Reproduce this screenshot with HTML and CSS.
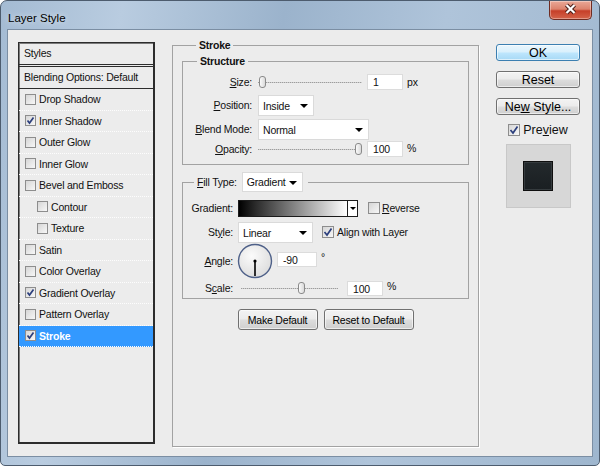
FILE: index.html
```html
<!DOCTYPE html>
<html lang="en">
<head>
  <meta charset="UTF-8" />
  <title>Layer Style</title>
  <link rel="stylesheet" href="styles.css">
</head>
<body>

  <div class="window">
    <!-- Title bar -->
    <div class="titlebar">
      <span class="title">Layer Style</span>
      <div class="close-btn">
        <svg width="43" height="19" viewBox="0 0 43 19">
          <path d="M17.5 5 L25.5 13 M25.5 5 L17.5 13" stroke="#4a1d17" stroke-width="4.2" fill="none"/>
          <path d="M17.5 5 L25.5 13 M25.5 5 L17.5 13" stroke="#fff" stroke-width="2.2" fill="none"/>
        </svg>
      </div>
    </div>

    <div class="client">
      <!-- Styles list -->
      <div class="styles-list">
        <div class="list-head">Styles</div>
        <div class="list-blend">Blending Options: Default</div>
        <div class="list-item"><span class="check"></span>Drop Shadow</div>
        <div class="list-item"><span class="check"><svg viewBox="0 0 9 9"><path d="M1.5 4.5 L3.5 7 L7.5 1.5" /></svg></span>Inner Shadow</div>
        <div class="list-item"><span class="check"></span>Outer Glow</div>
        <div class="list-item"><span class="check"></span>Inner Glow</div>
        <div class="list-item"><span class="check"></span>Bevel and Emboss</div>
        <div class="list-item sub"><span class="check"></span>Contour</div>
        <div class="list-item sub"><span class="check"></span>Texture</div>
        <div class="list-item"><span class="check"></span>Satin</div>
        <div class="list-item"><span class="check"></span>Color Overlay</div>
        <div class="list-item"><span class="check"><svg viewBox="0 0 9 9"><path d="M1.5 4.5 L3.5 7 L7.5 1.5" /></svg></span>Gradient Overlay</div>
        <div class="list-item"><span class="check"></span>Pattern Overlay</div>
        <div class="list-item selected"><span class="check"><svg viewBox="0 0 9 9"><path d="M1.5 4.5 L3.5 7 L7.5 1.5" /></svg></span>Stroke</div>
      </div>

      <!-- Stroke settings -->
      <fieldset class="group main-group">
        <legend>Stroke</legend>

        <fieldset class="group structure">
          <legend>Structure</legend>
          <div class="row r-size">
            <span class="lbl"><u>S</u>ize:</span>
            <div class="slider"><span class="thumb"></span></div>
            <span class="field">1</span>
            <span class="unit">px</span>
          </div>
          <div class="row r-pos">
            <span class="lbl"><u>P</u>osition:</span>
            <div class="select sel-pos">Inside<span class="arrow"></span></div>
          </div>
          <div class="row r-blend">
            <span class="lbl"><u>B</u>lend Mode:</span>
            <div class="select sel-blend">Normal<span class="arrow"></span></div>
          </div>
          <div class="row r-opacity">
            <span class="lbl"><u>O</u>pacity:</span>
            <div class="slider"><span class="thumb end"></span></div>
            <span class="field">100</span>
            <span class="unit">%</span>
          </div>
        </fieldset>

        <fieldset class="group fill">
          <legend>
            <span><u>F</u>ill Type:</span>
            <div class="select sel-fill">Gradient<span class="arrow"></span></div>
          </legend>
          <div class="row r-grad">
            <span class="lbl">Gradient:</span>
            <div class="grad-box"><span class="grad"></span><span class="grad-arrow"><span class="arrow"></span></span></div>
            <span class="check lg rev"></span>
            <span class="cb-text"><u>R</u>everse</span>
          </div>
          <div class="row r-style">
            <span class="lbl">St<u>y</u>le:</span>
            <div class="select sel-style">Linear<span class="arrow"></span></div>
            <span class="check lg align"><svg viewBox="0 0 10 10"><path d="M1.5 5 L4 8 L8.5 1.5" /></svg></span>
            <span class="cb-text">Align with Layer</span>
          </div>
          <div class="row r-angle">
            <span class="lbl"><u>A</u>ngle:</span>
            <svg class="dial" width="36" height="36" viewBox="0 0 36 36">
              <defs>
                <radialGradient id="dialFill" cx="40%" cy="35%" r="70%">
                  <stop offset="0" stop-color="#fbfbfb"/>
                  <stop offset="1" stop-color="#dcdcdc"/>
                </radialGradient>
              </defs>
              <circle cx="18" cy="18" r="16.5" fill="url(#dialFill)" stroke="#4f6189" stroke-width="1.4"/>
              <line x1="18" y1="18" x2="18" y2="33" stroke="#000" stroke-width="1.6"/>
              <circle cx="18" cy="18" r="1.6" fill="#000"/>
            </svg>
            <span class="field angle-field">-90</span>
            <span class="deg">°</span>
          </div>
          <div class="row r-scale">
            <span class="lbl">S<u>c</u>ale:</span>
            <div class="slider scale-slider"><span class="thumb mid"></span></div>
            <span class="field scale-field">100</span>
            <span class="unit">%</span>
          </div>
        </fieldset>

        <div class="defaults">
          <button class="small-btn make">Make Default</button>
          <button class="small-btn reset">Reset to Default</button>
        </div>
      </fieldset>

      <!-- Dialog actions -->
      <div class="actions">
        <button class="btn primary">OK</button>
        <button class="btn">Reset</button>
        <button class="btn">Ne<u>w</u> Style...</button>
        <div class="preview-toggle">
          <span class="check lg"><svg viewBox="0 0 10 10"><path d="M1.5 5 L4 8 L8.5 1.5" /></svg></span>
          <span>Pre<u>v</u>iew</span>
        </div>
        <div class="preview-box"><div class="swatch"></div></div>
      </div>
    </div>
  </div>

</body>
</html>
```

FILE: styles.css
```css
:root {
  --face: #ececec;
  --group-line: #a2a2a2;
  --select-blue: #3399ff;
}

body {
  margin: 0;
  font-family: 'Liberation Sans', Arial, sans-serif;
  font-size: 10.5px;
  letter-spacing: -0.2px;
  color: #111;
  background: #fff;
}

u {
  text-decoration: underline;
}

/* Window frame */
.window {
  width: 600px;
  height: 466px;
  box-sizing: border-box;
  display: flex;
  flex-direction: column;
  border: 1px solid #4d5c6e;
  border-radius: 7px 7px 5px 5px;
  overflow: hidden;
  background: linear-gradient(100deg, #a4bbd3 0%, #b9cce0 18%, #9bb3cc 42%, #afc4da 66%, #9eb6ce 100%);
}

.titlebar {
  height: 28px;
  display: flex;
  align-items: flex-start;
}

.title {
  padding: 10px 0 0 7px;
  font-size: 11.5px;
  letter-spacing: 0;
  line-height: 14px;
  color: #000;
  text-shadow: 0 0 6px rgba(255, 255, 255, 0.8);
}

.close-btn {
  margin-left: auto;
  margin-right: 7px;
  width: 43px;
  height: 19px;
  box-sizing: border-box;
  border: 1px solid #6f2c22;
  border-top: none;
  border-radius: 0 0 5px 5px;
  background: linear-gradient(#eaa897 0%, #dc836d 45%, #c63f29 55%, #d4644a 100%);
  box-shadow: inset 0 0 0 1px rgba(255, 255, 255, 0.35);
}

.close-btn svg {
  display: block;
  margin: -1px 0 0 -1px;
}

.client {
  flex: 1;
  margin: 0 6px 8px 6px;
  border: 1px solid #7b8ea3;
  background: var(--face);
  padding: 12px 0 0 10px;
  display: flex;
  align-items: flex-start;
}

/* Styles list */
.styles-list {
  width: 137px;
  height: 402px;
  box-sizing: border-box;
  border: 1px solid #2c2c2c;
  border-right-width: 2px;
  border-bottom-width: 2px;
  box-shadow: inset 1px 1px 0 #7a7a7a;
  display: flex;
  flex-direction: column;
}

.list-head,
.list-blend {
  height: 21px;
  line-height: 21px;
  padding-left: 5px;
  flex-shrink: 0;
}

.list-head {
  border-bottom: 3px double #2c2c2c;
}

.list-blend {
  border-bottom: 1px solid #2c2c2c;
}

.list-item {
  height: 21.5px;
  box-sizing: border-box;
  flex-shrink: 0;
  display: flex;
  align-items: center;
  padding-left: 6px;
  border-bottom: 1px dotted #fdfdfd;
}

.list-item.sub {
  padding-left: 18px;
}

.list-item.selected {
  background: var(--select-blue);
  color: #fff;
  font-weight: bold;
}

/* Checkboxes */
.check {
  width: 11px;
  height: 11px;
  box-sizing: border-box;
  flex-shrink: 0;
  margin-right: 3px;
  border: 1px solid #8d8d8d;
  background: linear-gradient(135deg, #d6d6d6, #f7f7f7);
  display: flex;
  align-items: center;
  justify-content: center;
}

.check svg {
  width: 9px;
  height: 9px;
}

.check path {
  fill: none;
  stroke: #2c3f7d;
  stroke-width: 1.7;
}

.check.lg {
  width: 12px;
  height: 12px;
}

.check.lg svg {
  width: 10px;
  height: 10px;
}

/* Group boxes */
.group {
  margin: 0;
  padding: 0;
  min-width: 0;
  border: 1px solid var(--group-line);
  box-sizing: border-box;
}

.group > legend {
  font-weight: bold;
  line-height: 13px;
  padding: 0 3px;
  margin-left: 14px;
}

.main-group {
  margin: -3px 0 0 17px;
  width: 307px;
  height: 408px;
  padding: 0 9px;
  box-shadow: 1px 1px 0 #fff;
}

.structure {
  margin-top: 3px;
  padding: 4px 0 6px;
}

.row {
  display: flex;
  align-items: center;
}

.lbl {
  flex: 0 0 auto;
  text-align: right;
  white-space: nowrap;
}

.structure .lbl {
  width: 69px;
  margin-right: 6px;
}

.r-size { height: 20px; }
.r-pos { height: 22px; margin-top: 2px; }
.r-blend { height: 22px; margin-top: 2px; }
.r-opacity { height: 18px; }

/* Sliders */
.slider {
  width: 104px;
  height: 12px;
  margin-right: 5px;
  display: flex;
  align-items: center;
  background: repeating-linear-gradient(90deg, #9d9d9d 0 1px, #cfcfcf 1px 2px) center / 100% 1px no-repeat;
}

.thumb {
  width: 7px;
  height: 12px;
  box-sizing: border-box;
  margin-left: 1px;
  border: 1px solid #8a8a8a;
  border-radius: 3px;
  background: linear-gradient(90deg, #fafafa, #dadada);
}

.thumb.end {
  margin-left: auto;
  margin-right: 0;
}

.field {
  width: 36px;
  height: 16px;
  box-sizing: border-box;
  background: #fff;
  border: 1px solid #dcdcdc;
  padding-left: 5px;
  line-height: 14px;
}

.unit {
  margin-left: 4px;
  align-self: flex-start;
  margin-top: 2px;
}

.r-size .unit { margin-top: 4px; }

/* Drop-down boxes */
.select {
  height: 21px;
  box-sizing: border-box;
  background: #fff;
  border: 1px solid #dadada;
  padding: 1px 5px 0 4px;
  display: flex;
  align-items: center;
  justify-content: space-between;
  font-weight: normal;
}

.arrow {
  flex-shrink: 0;
  width: 0;
  height: 0;
  border-left: 4px solid transparent;
  border-right: 4px solid transparent;
  border-top: 4px solid #000;
}

.sel-pos { width: 56px; }
.sel-blend { width: 111px; }
.sel-style { width: 75px; }

/* Fill group */
.fill {
  margin-top: 7px;
  padding: 7px 0 3px;
}

.fill > legend {
  display: flex;
  align-items: center;
  font-weight: normal;
  margin-left: 11px;
  padding: 0 5px 0 3px;
}

.sel-fill {
  width: 61px;
  height: 20px;
  margin-left: 5px;
}

.fill .lbl {
  width: 50px;
  margin-right: 5px;
}

.r-grad { height: 18px; margin-bottom: 4px; }
.r-style { height: 22px; }
.r-angle { height: 36px; }
.r-scale { height: 14px; margin-top: 2px; }

.grad-box {
  width: 120px;
  height: 17px;
  box-sizing: border-box;
  border: 1px solid #1b1b1b;
  display: flex;
}

.grad {
  flex: 1;
  background: linear-gradient(90deg, #000 0%, #2a2a2a 15%, #fff 100%);
}

.grad-arrow {
  width: 9px;
  border-left: 1px solid #1b1b1b;
  background: #fff;
  display: flex;
  align-items: center;
  justify-content: center;
}

.grad-arrow .arrow {
  border-left-width: 3px;
  border-right-width: 3px;
  border-top-width: 3px;
}

.check.rev {
  margin-left: 10px;
  margin-right: 2px;
}

.check.align {
  margin-left: 9px;
  margin-right: 3px;
}

.dial {
  display: block;
  flex-shrink: 0;
  margin-left: -1px;
}

.angle-field {
  width: 40px;
  height: 15px;
  margin-left: 4px;
  align-self: flex-start;
  margin-top: 9px;
}

.deg {
  align-self: flex-start;
  margin: 8px 0 0 4px;
}

.scale-slider {
  width: 97px;
  margin-left: 3px;
  margin-right: 9px;
}

.thumb.mid {
  margin-left: 57px;
}

.scale-field {
  height: 15px;
}

.r-scale .unit {
  margin-top: -1px;
}

/* Buttons */
.defaults {
  display: flex;
  justify-content: center;
  gap: 6px;
  margin-top: 10px;
}

.small-btn,
.btn {
  font-family: inherit;
  color: #000;
  border: 1px solid #707070;
  border-radius: 3px;
  background: linear-gradient(#f3f3f3 0%, #ebebeb 48%, #dddddd 52%, #cfcfcf 100%);
  box-shadow: inset 0 0 0 1px rgba(255, 255, 255, 0.6);
  padding: 0;
  cursor: pointer;
}

.small-btn {
  height: 21px;
  font-size: 10.5px;
  letter-spacing: -0.2px;
}

.small-btn.make { width: 80px; }
.small-btn.reset { width: 90px; }

.actions {
  width: 84px;
  margin: 2px 0 0 17px;
  display: flex;
  flex-direction: column;
  letter-spacing: 0;
}

.btn {
  height: 17px;
  font-size: 12.5px;
  line-height: 14px;
  margin-bottom: 10px;
}

.btn.primary {
  border-color: #3c7fb1;
  background: linear-gradient(#eaf6fd 0%, #d9f0fc 48%, #bee6fd 52%, #a7d9f5 100%);
}

.actions .btn:nth-of-type(3) {
  margin-bottom: 8px;
}

.preview-toggle {
  display: flex;
  align-items: center;
  justify-content: center;
  height: 14px;
  font-size: 12.5px;
}

.preview-toggle .check {
  margin-right: 3px;
}

.preview-box {
  align-self: center;
  width: 65px;
  height: 64px;
  box-sizing: border-box;
  margin-top: 7px;
  border: 1px solid #c8c8c8;
  background: #d7d7d7;
  display: flex;
  align-items: center;
  justify-content: center;
}

.swatch {
  width: 30px;
  height: 30px;
  box-sizing: border-box;
  background: linear-gradient(#23292c, #1a1f22);
  border: 1px solid #0e0e0e;
  box-shadow: inset 0 0 0 1px #353b3e;
}
```
